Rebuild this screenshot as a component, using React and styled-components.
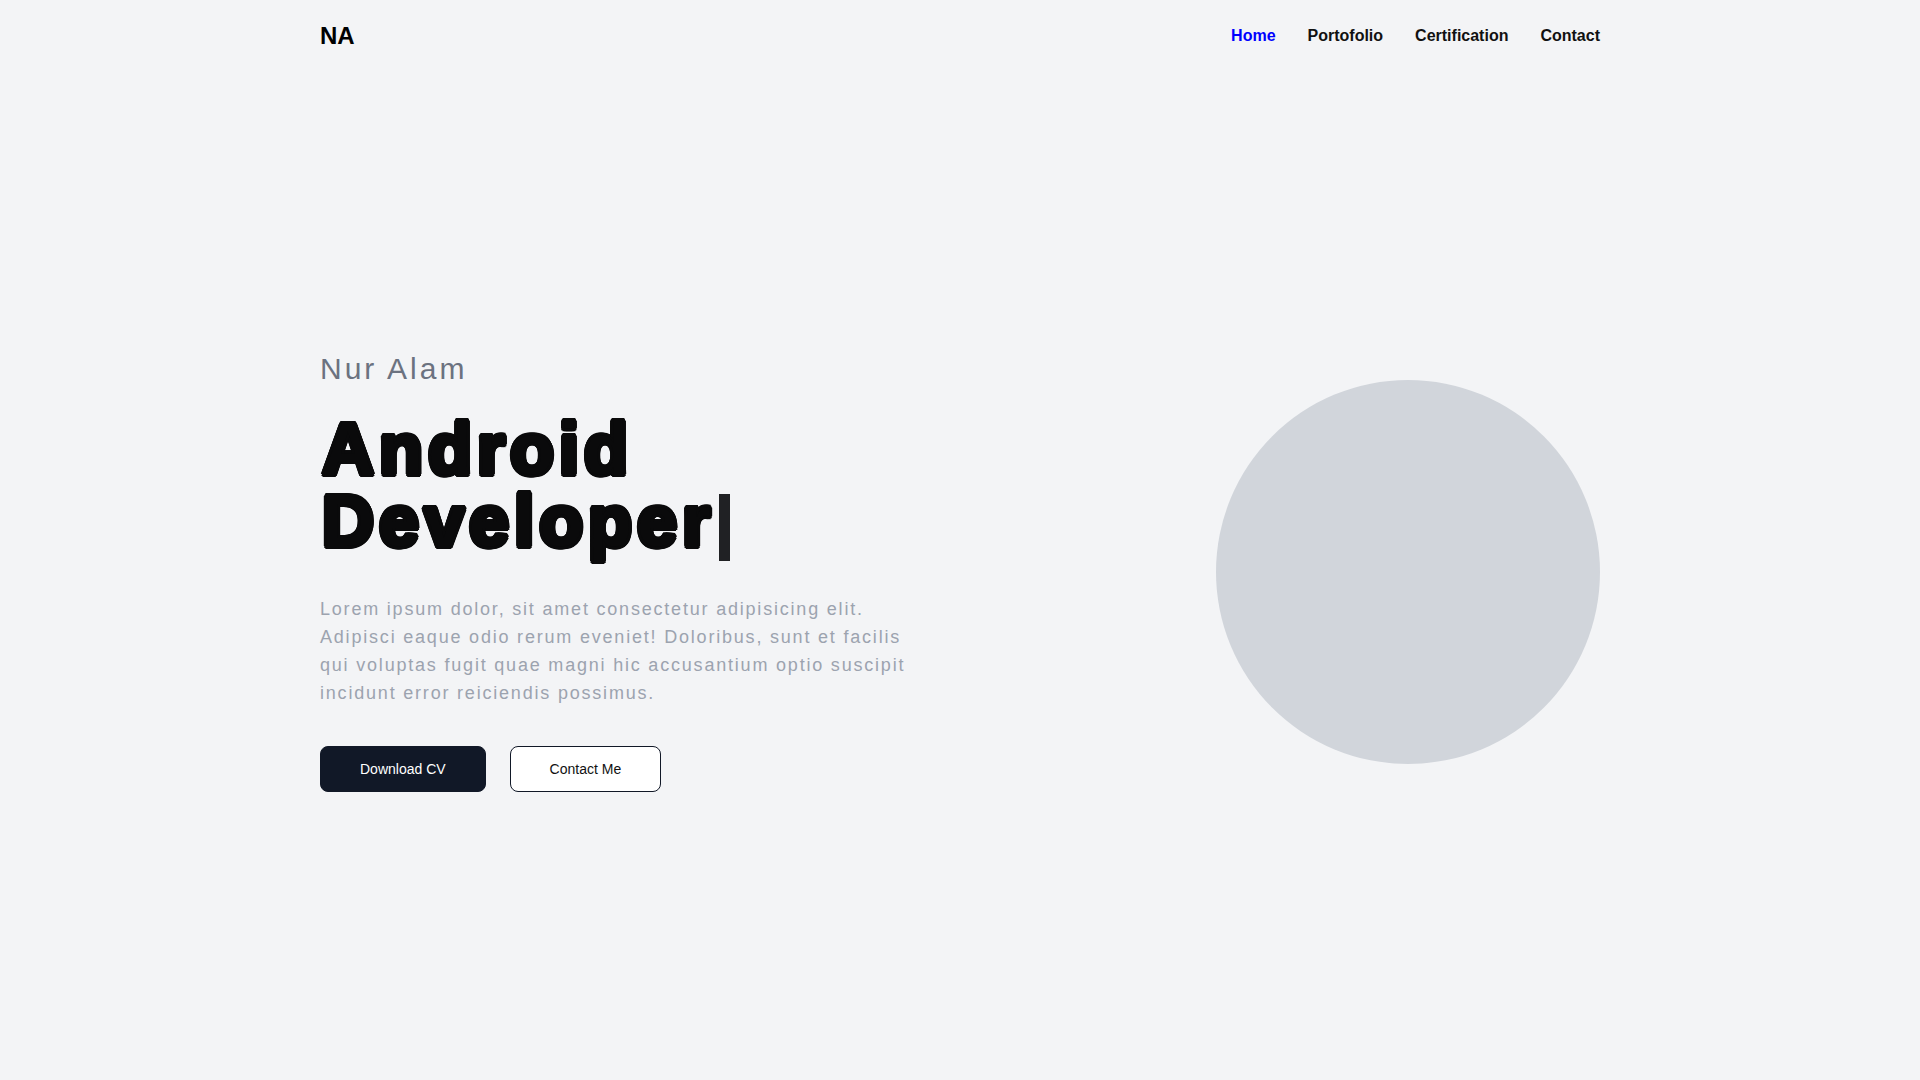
import React from "react";
import styled, { createGlobalStyle } from "styled-components";

const GlobalStyle = createGlobalStyle`
  * { box-sizing: border-box; }
  html, body { margin: 0; padding: 0; }
  body {
    background: #f3f4f6;
    font-family: "Liberation Sans", Arial, sans-serif;
    color: #111;
  }
`;

const ink = "#0a0a0b";
const heavy = [
  [3, 0], [-3, 0], [0, 3], [0, -3],
  [2.1, 2.1], [-2.1, 2.1], [2.1, -2.1], [-2.1, -2.1],
  [2.6, 1.5], [-2.6, 1.5], [2.6, -1.5], [-2.6, -1.5],
  [1.5, 2.6], [-1.5, 2.6], [1.5, -2.6], [-1.5, -2.6],
  [1.5, 0], [-1.5, 0], [0, 1.5], [0, -1.5],
]
  .map(([x, y]) => `${x}px ${y}px 0 ${ink}`)
  .join(", ");

const Page = styled.div`
  min-height: 100vh;
  background: #f3f4f6;
`;

const Container = styled.div`
  width: 1280px;
  margin: 0 auto;
`;

const Header = styled.header`
  padding: 20px 0 11px;
`;

const HeaderRow = styled(Container)`
  display: flex;
  align-items: center;
  justify-content: space-between;
  height: 32px;
`;

const Logo = styled.div`
  font-size: 24px;
  line-height: 32px;
  font-weight: 700;
  color: #000;
`;

const Nav = styled.nav`
  display: flex;
  gap: 32px;
`;

const NavLink = styled.a`
  font-size: 16px;
  line-height: 24px;
  font-weight: 700;
  text-decoration: none;
  color: ${(p) => (p.$active ? "#0000ff" : "#111111")};
  cursor: pointer;
`;

const Hero = styled.main`
  height: calc(100vh - 63px);
  display: flex;
  align-items: center;
`;

const HeroRow = styled(Container)`
  display: flex;
  align-items: center;
  justify-content: space-between;
`;

const Intro = styled.div`
  display: flex;
  flex-direction: column;
  align-items: flex-start;
`;

const Name = styled.h2`
  margin: 0;
  font-size: 30px;
  line-height: 36px;
  font-weight: 400;
  letter-spacing: 3px;
  color: #6b7280;
`;

const Title = styled.h1`
  margin: 26px 0 0;
  padding-left: 2px;
  font-size: 72px;
  line-height: 72px;
  font-weight: 700;
  letter-spacing: 5px;
  color: ${ink};
  text-shadow: ${heavy};
`;

const Caret = styled.span`
  display: inline-block;
  width: 11px;
  height: 67px;
  margin-left: 4px;
  vertical-align: -15px;
  background: #202124;
`;

const Text = styled.p`
  margin: 34px 0 0;
  max-width: 600px;
  font-size: 18px;
  line-height: 28px;
  letter-spacing: 1.8px;
  color: #9ca3af;
`;

const Actions = styled.div`
  display: flex;
  gap: 24px;
  margin-top: 39px;
`;

const Button = styled.button`
  height: 46px;
  padding: 0 39px;
  border-radius: 8px;
  border: 1px solid #111827;
  font-family: "Liberation Sans", Arial, sans-serif;
  font-size: 14px;
  line-height: 16px;
  cursor: pointer;
  background: ${(p) => (p.$primary ? "#111827" : "#ffffff")};
  color: ${(p) => (p.$primary ? "#ffffff" : "#111111")};
`;

const Avatar = styled.div`
  width: 384px;
  height: 384px;
  border-radius: 50%;
  background: #d1d5db;
  flex-shrink: 0;
`;

export default function App() {
  return (
    <Page>
      <GlobalStyle />
      <Header>
        <HeaderRow>
          <Logo>NA</Logo>
          <Nav>
            <NavLink $active>Home</NavLink>
            <NavLink>Portofolio</NavLink>
            <NavLink>Certification</NavLink>
            <NavLink>Contact</NavLink>
          </Nav>
        </HeaderRow>
      </Header>
      <Hero>
        <HeroRow>
          <Intro>
            <Name>Nur Alam</Name>
            <Title>
              Android
              <br />
              Developer
              <Caret />
            </Title>
            <Text>
              Lorem ipsum dolor, sit amet consectetur adipisicing elit.
              Adipisci eaque odio rerum eveniet! Doloribus, sunt et facilis
              qui voluptas fugit quae magni hic accusantium optio suscipit
              incidunt error reiciendis possimus.
            </Text>
            <Actions>
              <Button $primary>Download CV</Button>
              <Button>Contact Me</Button>
            </Actions>
          </Intro>
          <Avatar />
        </HeroRow>
      </Hero>
    </Page>
  );
}
